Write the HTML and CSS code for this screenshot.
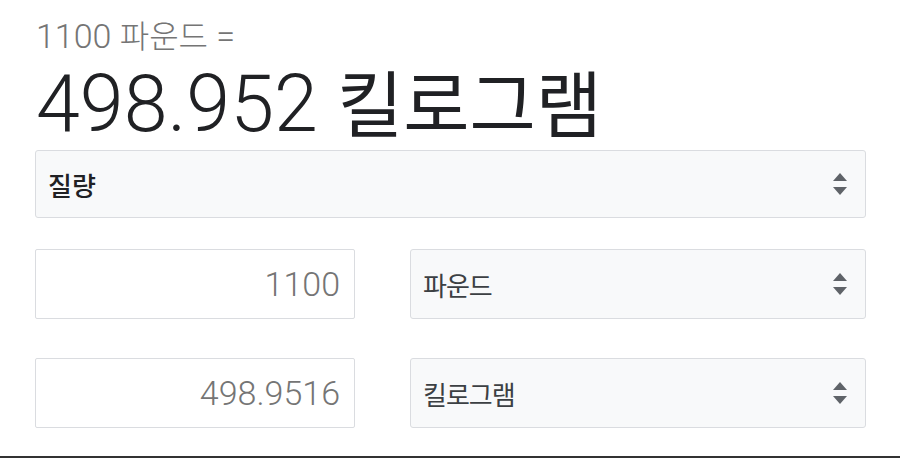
FILE: index.html
```html
<!DOCTYPE html>
<html lang="ko">
<head>
<meta charset="utf-8">
<link rel="stylesheet" href="styles.css">
</head>
<body>
<div class="conv">
  <div class="src">1100 <span class="ko-sm">파운드</span> =</div>
  <div class="res">498.952 <span class="ko-lg">킬로그램</span></div>
  <div class="sel sel-main">
    <span class="sel-text bold">질량</span>
    <svg class="arrows" viewBox="0 0 16 22" width="16" height="22"><path d="M8 0 L15 8 L1 8 Z M8 22 L15 14 L1 14 Z" fill="#5f6368"/></svg>
  </div>
  <div class="row">
    <div class="inp">1100</div>
    <div class="sel">
      <span class="sel-text">파운드</span>
      <svg class="arrows" viewBox="0 0 16 22" width="16" height="22"><path d="M8 0 L15 8 L1 8 Z M8 22 L15 14 L1 14 Z" fill="#5f6368"/></svg>
    </div>
  </div>
  <div class="row">
    <div class="inp">498.9516</div>
    <div class="sel">
      <span class="sel-text">킬로그램</span>
      <svg class="arrows" viewBox="0 0 16 22" width="16" height="22"><path d="M8 0 L15 8 L1 8 Z M8 22 L15 14 L1 14 Z" fill="#5f6368"/></svg>
    </div>
  </div>
</div>
<div class="bottom-line"></div>
</body>
</html>
```
FILE: styles.css
```css
html, body {
  margin: 0;
  padding: 0;
  background: #fff;
}
body {
  width: 900px;
  height: 458px;
  overflow: hidden;
  position: relative;
  font-family: Roboto, "Noto Sans CJK KR", sans-serif;
}
.conv {
  padding: 14px 34px 0 35px;
}
.src {
  height: 44px;
  font-size: 34px;
  line-height: 44px;
  color: #757575;
  font-weight: 300;
  padding-left: 1px;
}
.ko-sm {
  font-family: "Noto Sans CJK KR", sans-serif;
  font-size: 32px;
  line-height: 1;
  font-weight: 300;
}
.res {
  height: 92px;
  font-size: 79px;
  line-height: 92px;
  color: #202124;
  font-weight: 300;
  padding-left: 1px;
  white-space: nowrap;
}
.ko-lg {
  font-family: "Noto Sans CJK KR", sans-serif;
  font-size: 72px;
  line-height: 1;
  font-weight: 400;
}
.sel {
  box-sizing: border-box;
  display: flex;
  align-items: center;
  justify-content: space-between;
  background: #f8f9fa;
  border: 1px solid #dadce0;
  border-radius: 3px;
  padding: 0 17px 0 12px;
}
.sel-main {
  height: 68px;
}
.sel-text {
  font-family: "Noto Sans CJK KR", sans-serif;
  font-size: 26px;
  color: #3c4043;
  letter-spacing: -1px;
}
.bold {
  font-weight: 500;
  color: #202124;
  letter-spacing: 0;
}
.row {
  display: grid;
  grid-template-columns: 320px 456px;
  column-gap: 55px;
  height: 70px;
  margin-top: 31px;
}
.row + .row {
  margin-top: 39px;
}
.inp {
  box-sizing: border-box;
  border: 1px solid #dadce0;
  border-radius: 2px;
  display: flex;
  align-items: center;
  justify-content: flex-end;
  padding-right: 14px;
  font-size: 34px;
  font-weight: 300;
  color: #757575;
}
.bottom-line {
  position: absolute;
  left: 0;
  right: 0;
  bottom: 0;
  height: 2px;
  background: #333;
}
```
